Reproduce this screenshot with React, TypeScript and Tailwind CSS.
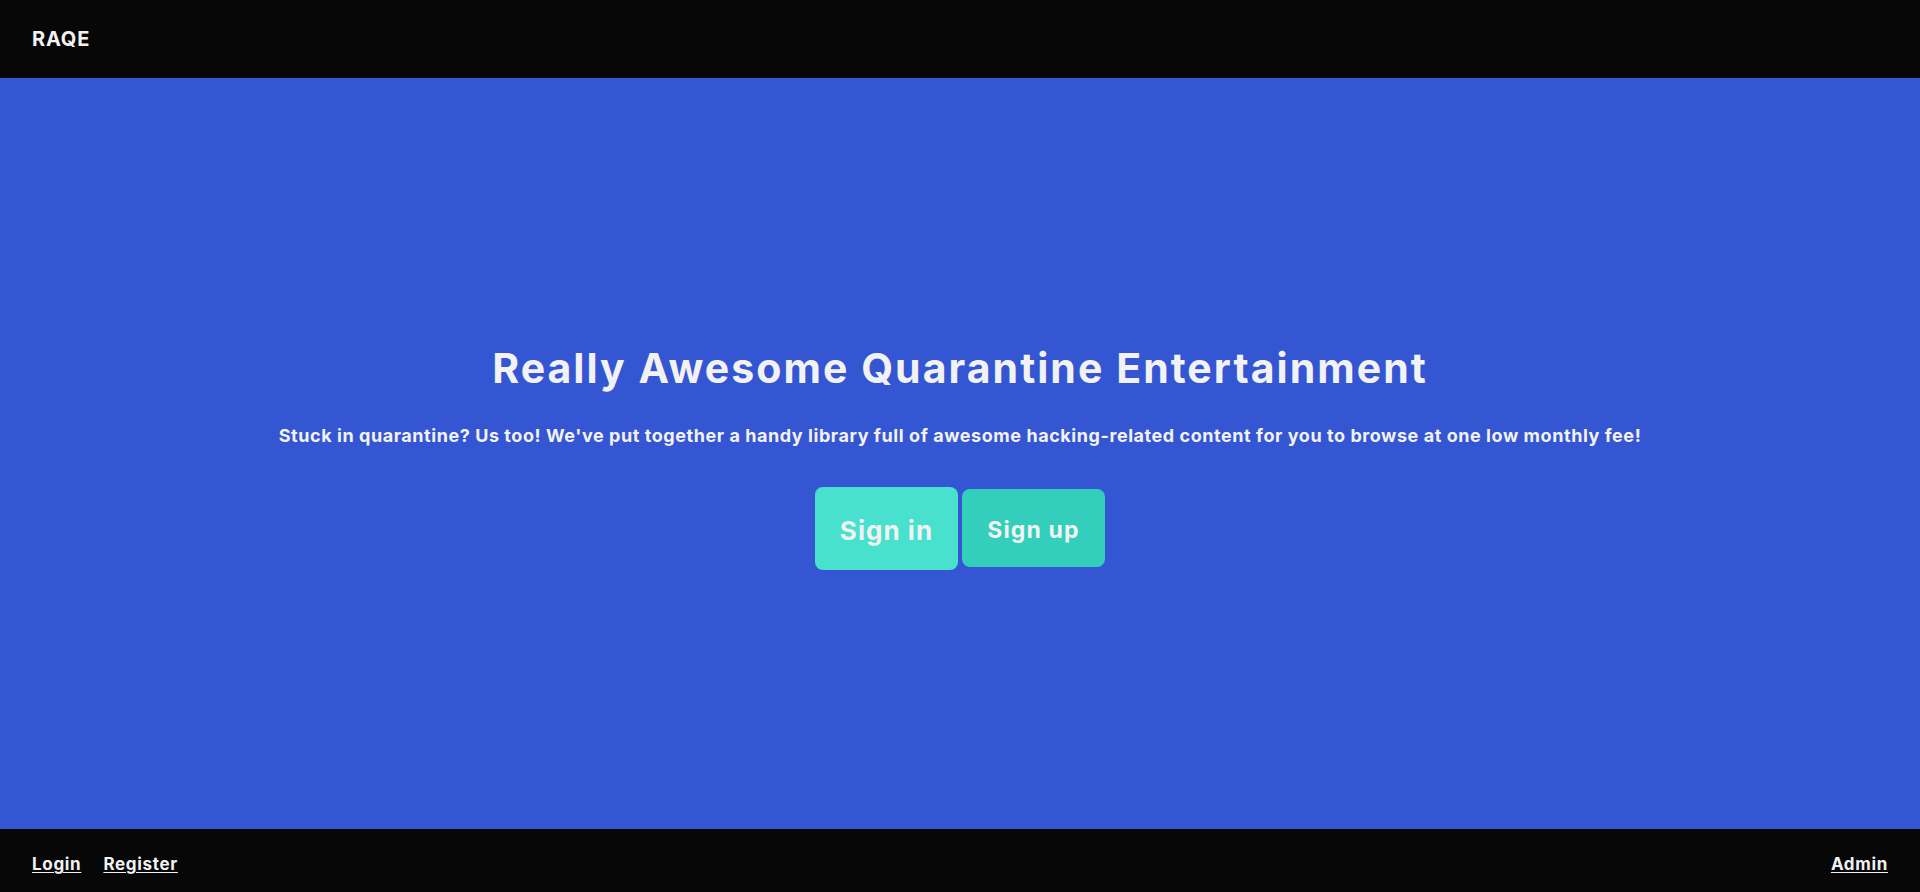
import React from 'react';

const App: React.FC = () => {
  return (
    <div className="flex h-[892px] flex-col bg-[#3556d2] font-['Inter','Roboto',sans-serif] text-[#f2f2f2]">
      <header className="flex h-[78px] items-center bg-[#070707] px-8">
        <span className="text-[20px] font-bold tracking-[0.04em]">RAQE</span>
      </header>

      <main className="flex flex-1 flex-col items-center justify-center pt-[6px]">
        <h1 className="text-[41px] font-bold leading-tight tracking-[0.05em]">Really Awesome Quarantine Entertainment</h1>
        <p className="mt-[27px] text-[18px] font-bold tracking-[0.031em]">
          Stuck in quarantine? Us too! We've put together a handy library full of awesome hacking-related content for you to browse at one low monthly fee!
        </p>
        <div className="mt-[38px] flex items-center gap-1">
          <button className="h-[83px] w-[143px] rounded-lg bg-[#47e1ce] pt-1 text-[26px] font-bold tracking-[0.04em]">Sign in</button>
          <button className="h-[78px] w-[143px] rounded-lg bg-[#33cfbc] pt-1 text-[23px] font-bold tracking-[0.05em]">Sign up</button>
        </div>
      </main>

      <footer className="flex h-[63px] items-center justify-between bg-[#070707] px-8 pt-[9px] text-[17px] font-bold tracking-[0.04em]">
        <div className="flex gap-[22px]">
          <a href="#" className="underline underline-offset-2">Login</a>
          <a href="#" className="underline underline-offset-2">Register</a>
        </div>
        <a href="#" className="underline underline-offset-2">Admin</a>
      </footer>
    </div>
  );
};

export default App;
